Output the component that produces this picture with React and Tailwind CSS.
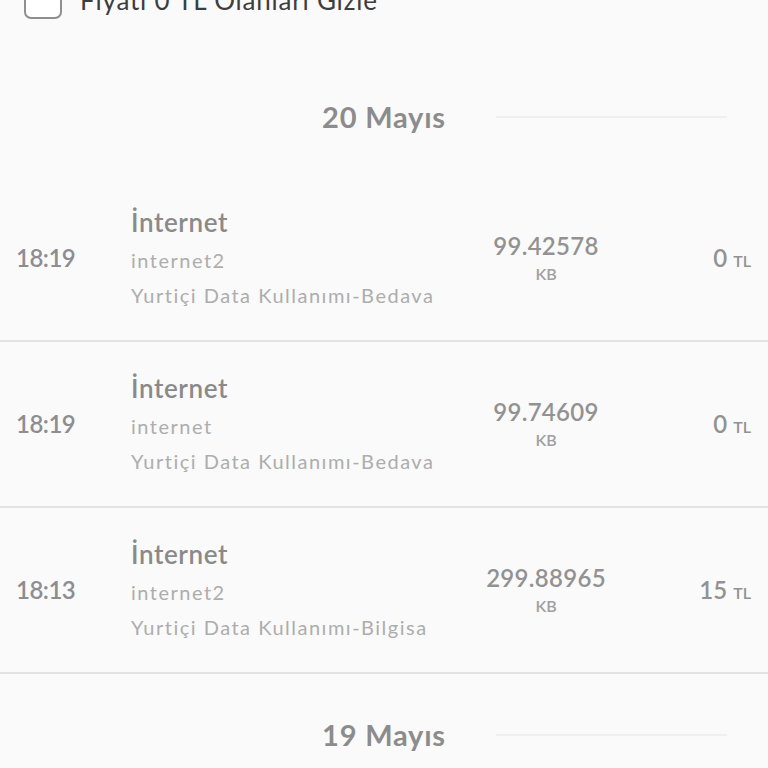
const days = [
  {
    date: '20 Mayıs',
    items: [
      { time: '18:19', title: 'İnternet', sub: 'internet2', desc: 'Yurtiçi Data Kullanımı-Bedava', amount: '99.42578', price: '0' },
      { time: '18:19', title: 'İnternet', sub: 'internet', desc: 'Yurtiçi Data Kullanımı-Bedava', amount: '99.74609', price: '0' },
      { time: '18:13', title: 'İnternet', sub: 'internet2', desc: 'Yurtiçi Data Kullanımı-Bilgisa', amount: '299.88965', price: '15' },
    ],
  },
  { date: '19 Mayıs', items: [] },
];

const DayHeader = ({ date }) => (
  <div className="grid grid-cols-[1fr_auto_1fr] items-center pt-[45px] pb-[43px]">
    <div />
    <div className="text-[29px] leading-[32px] font-bold tracking-[0.8px] text-[#8c8c8c]">{date}</div>
    <div className="ml-[50px] mr-[41px] h-[2px] bg-[#efefef]" />
  </div>
);

const UsageRow = ({ item }) => (
  <div className="flex items-center h-[166px] border-b-2 border-[#e2e2e2]">
    <div className="w-[131px] pl-[16px] text-[24px] tracking-[-0.5px] text-[#8d8d92] font-semibold">{item.time}</div>
    <div className="flex-1 flex flex-col">
      <div className="text-[26px] leading-[36px] font-semibold tracking-[0.6px] text-[#8a8a8a]">{item.title}</div>
      <div className="pt-[3px] flex flex-col">
        <div className="text-[20px] leading-[35px] tracking-[1.5px] text-[#adadad]">{item.sub}</div>
        <div className="text-[20px] leading-[35px] tracking-[1.5px] text-[#adadad]">{item.desc}</div>
      </div>
    </div>
    <div className="w-[160px] flex flex-col items-center mt-[4px]">
      <div className="text-[24px] leading-[28px] font-semibold tracking-[0.3px] text-[#929292]">{item.amount}</div>
      <div className="text-[16px] leading-[28px] font-semibold text-[#a0a0a0]">KB</div>
    </div>
    <div className="w-[142px] pr-[17px] flex items-baseline justify-end gap-[6px] text-[#929292]">
      <span className="text-[24px] font-semibold">{item.price}</span>
      <span className="text-[16px] font-semibold">TL</span>
    </div>
  </div>
);

export default function App() {
  return (
    <div className="w-[768px] h-[768px] overflow-hidden bg-[#fafafa]" style={{ fontFamily: '"Lato", "Noto Sans", sans-serif' }}>
      <div className="-mt-[19px] flex items-center h-[38px] pl-[24px] gap-[18px]">
        <div className="w-[38px] h-[38px] rounded-[7px] border-2 border-[#8f8f8f] bg-white" />
        <span className="text-[26px] tracking-[0.8px] text-[#3d3d3d]">Fiyatı 0 TL Olanları Gizle</span>
      </div>
      <div className="mt-[37px]">
        {days.map((day) => (
          <div key={day.date}>
            <DayHeader date={day.date} />
            {day.items.map((item, i) => (
              <UsageRow key={i} item={item} />
            ))}
          </div>
        ))}
      </div>
    </div>
  );
}
